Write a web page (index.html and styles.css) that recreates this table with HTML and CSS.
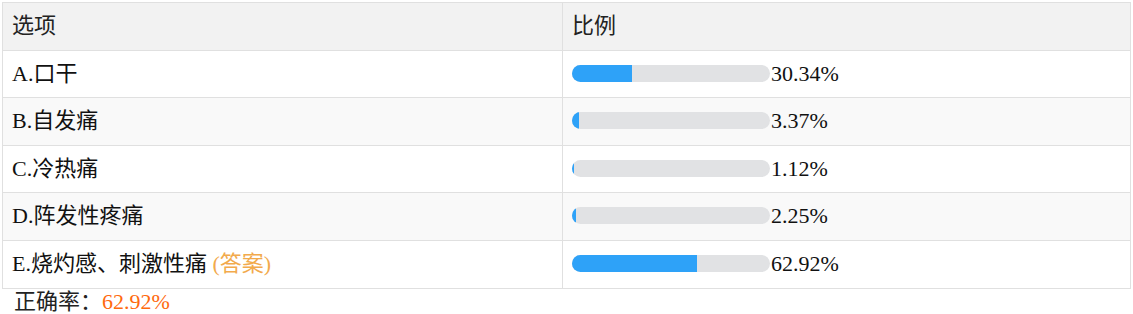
FILE: index.html
```html
<!DOCTYPE html>
<html lang="zh">
<head>
<meta charset="utf-8">
<link rel="stylesheet" href="styles.css">
</head>
<body>
<div class="wrap">
  <table class="stats">
    <colgroup><col class="col-opt"><col></colgroup>
    <thead>
      <tr><th>选项</th><th>比例</th></tr>
    </thead>
    <tbody>
      <tr>
        <td>A.口干</td>
        <td><span class="bar"><span class="fill" style="width:30.34%"></span></span><span class="pct">30.34%</span></td>
      </tr>
      <tr class="alt">
        <td>B.自发痛</td>
        <td><span class="bar"><span class="fill" style="width:3.37%"></span></span><span class="pct">3.37%</span></td>
      </tr>
      <tr>
        <td>C.冷热痛</td>
        <td><span class="bar"><span class="fill" style="width:1.12%"></span></span><span class="pct">1.12%</span></td>
      </tr>
      <tr class="alt">
        <td>D.阵发性疼痛</td>
        <td><span class="bar"><span class="fill" style="width:2.25%"></span></span><span class="pct">2.25%</span></td>
      </tr>
      <tr>
        <td>E.烧灼感、刺激性痛 <span class="answer">(答案)</span></td>
        <td><span class="bar"><span class="fill" style="width:62.92%"></span></span><span class="pct">62.92%</span></td>
      </tr>
    </tbody>
  </table>
  <div class="rate">正确率：<span class="rate-num">62.92%</span></div>
</div>
</body>
</html>
```
FILE: styles.css
```css
html, body {
  margin: 0;
  padding: 0;
  background: #fff;
}
body {
  font-family: "Liberation Serif", "Noto Sans CJK SC", serif;
  font-size: 22px;
  color: #111;
}
.wrap {
  padding: 2px;
}
.stats {
  width: 100%;
  border-collapse: collapse;
  table-layout: fixed;
}
.col-opt {
  width: 560px;
}
.stats th,
.stats td {
  border: 1px solid #e0e0e0;
  padding: 10px 10px 10px 9px;
  line-height: 26.6px;
  text-align: left;
  font-weight: normal;
  white-space: nowrap;
}
.stats th {
  background: #f2f2f2;
  color: #222;
}
.stats tr.alt td {
  background: #f9f9f9;
}
.bar {
  display: inline-block;
  width: 198px;
  height: 17px;
  border-radius: 9px;
  background: #e1e2e4;
  overflow: hidden;
  vertical-align: -1px;
}
.fill {
  display: block;
  height: 100%;
  background: #2ea2f8;
}
.pct {
  margin-left: 1px;
}
.answer {
  color: #f2aa4c;
}
.rate {
  padding-left: 12px;
  line-height: 26px;
  color: #222;
}
.rate-num {
  color: #ff6a0e;
}
```
